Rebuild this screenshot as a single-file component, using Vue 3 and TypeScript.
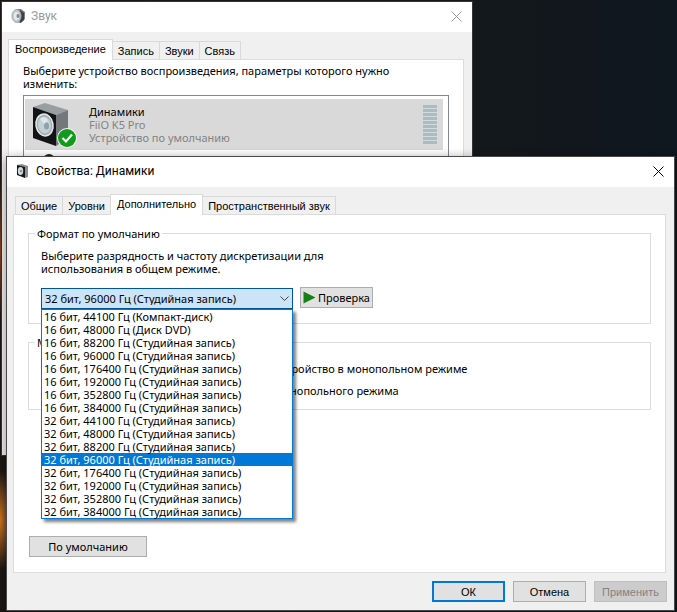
<script setup lang="ts">
import { ref } from 'vue'

const soundTabs = ['Воспроизведение', 'Запись', 'Звуки', 'Связь']
const propertyTabs = ['Общие', 'Уровни', 'Дополнительно', 'Пространственный звук']

const rates: string[] = [
  '16 бит, 44100 Гц (Компакт-диск)',
  '16 бит, 48000 Гц (Диск DVD)',
  ...['88200', '96000', '176400', '192000', '352800', '384000'].map((r) => `16 бит, ${r} Гц (Студийная запись)`),
  ...['44100', '48000', '88200', '96000', '176400', '192000', '352800', '384000'].map(
    (r) => `32 бит, ${r} Гц (Студийная запись)`,
  ),
]

const selected = ref('32 бит, 96000 Гц (Студийная запись)')
const exclusive = ref(true)
const priority = ref(true)
</script>

<template>
  <main class="desktop">
    <section class="window sound" aria-label="Звук">
      <header class="titlebar">
        <svg class="app-icon" viewBox="0 0 16 16" aria-hidden="true">
          <path d="M6 1h5l4 3v7l-4 4-5-1z" fill="#7b8184" />
          <path d="M10 2l4 3v7l-4 3z" fill="#3d4245" />
          <ellipse cx="6.500" cy="8" rx="4.500" ry="6.500" fill="#c3c9cb" stroke="#a4abad" />
          <ellipse cx="6.500" cy="8" rx="2.700" ry="4" fill="#e4e9ea" />
          <ellipse cx="8" cy="8" rx="1.500" ry="2" fill="#7e888c" />
        </svg>
        <h1>Звук</h1>
        <button class="close" type="button" aria-label="Закрыть">
          <svg viewBox="0 0 11 11"><path d="M.5 .5l10 10M10.500 .5l-10 10" /></svg>
        </button>
      </header>
      <nav class="tabs" role="tablist">
        <button v-for="(tab, i) in soundTabs" :key="tab" type="button" role="tab" :aria-selected="i === 0" :class="{ active: i === 0 }">{{ tab }}</button>
      </nav>
      <div class="pane playback">
        <p>Выберите устройство воспроизведения, параметры которого нужно изменить:</p>
        <div class="devices">
          <div class="device">
            <svg class="speaker" viewBox="0 0 46 46" aria-hidden="true">
              <path d="M2 5l12-4 23 7-12 5z" fill="#999ea1" />
              <path d="M25 13l12-5v28l-12 8z" fill="#74787c" />
              <path d="M2 5l23 8v31L2 36z" fill="#131415" />
              <ellipse cx="13.500" cy="23" rx="8.500" ry="11" fill="#a7afb2" stroke="#e6eaeb" stroke-width="1.500" transform="rotate(-10 13.500 23)" />
              <ellipse cx="13.500" cy="23" rx="6.500" ry="8.500" fill="#c3d0d6" transform="rotate(-10 13.500 23)" />
              <path d="M9 17q4-4 8 1l-3 5z" fill="#dfe7ea" />
              <ellipse cx="15.500" cy="24" rx="2.500" ry="3.500" fill="#8fa1aa" />
              <circle cx="36" cy="36" r="10" fill="#eef3ee" />
              <circle cx="36" cy="36" r="9" fill="#109b18" />
              <path d="M31.500 36l3.500 3.500 6-7" fill="none" stroke="#fff" stroke-width="2.200" />
            </svg>
            <div class="device-text">
              <strong>Динамики</strong>
              <span>FiiO K5 Pro</span>
              <span>Устройство по умолчанию</span>
            </div>
            <div class="meter"><i v-for="n in 10" :key="n"></i></div>
          </div>
          <div class="next-device"></div>
        </div>
      </div>
    </section>

    <section class="window properties" aria-label="Свойства: Динамики">
      <header class="titlebar">
        <svg class="app-icon" viewBox="0 0 16 16" aria-hidden="true">
          <path d="M2 2l5-1 6 2v11l-3 1z" fill="#8a8f92" />
          <path d="M2 2l8 2v11l-8-3z" fill="#16191a" />
          <ellipse cx="5.500" cy="8" rx="2.700" ry="4" fill="#d5dbdd" />
          <circle cx="6" cy="8" r="1.300" fill="#8c979b" />
        </svg>
        <h2>Свойства: Динамики</h2>
        <button class="close" type="button" aria-label="Закрыть">
          <svg viewBox="0 0 11 11"><path d="M.5 .5l10 10M10.500 .5l-10 10" /></svg>
        </button>
      </header>
      <nav class="tabs" role="tablist">
        <button v-for="(tab, i) in propertyTabs" :key="tab" type="button" role="tab" :aria-selected="i === 2" :class="{ active: i === 2 }">{{ tab }}</button>
      </nav>
      <div class="pane advanced">
        <fieldset>
          <legend>Формат по умолчанию</legend>
          <label class="hint" for="format">Выберите разрядность и частоту дискретизации для использования в общем режиме.</label>
          <div class="format-row">
            <div class="combo">
              <select id="format" v-model="selected">
                <option v-for="rate in rates" :key="rate">{{ rate }}</option>
              </select>
              <svg class="chevron" viewBox="0 0 9 6" aria-hidden="true"><path d="M.5 .5l4 4 4-4" /></svg>
              <ul class="options" role="listbox">
                <li v-for="rate in rates" :key="rate" role="option" :aria-selected="rate === selected" :class="{ current: rate === selected }" @click="selected = rate">{{ rate }}</li>
              </ul>
            </div>
            <button class="btn test" type="button">
              <svg viewBox="0 0 13 13" aria-hidden="true"><path d="M.5 .5l12 6-12 6z" /></svg>
              Проверка
            </button>
          </div>
        </fieldset>
        <fieldset class="exclusive">
          <legend>Монопольный режим</legend>
          <label><input v-model="exclusive" type="checkbox" />Разрешить приложениям использовать устройство в монопольном режиме</label>
          <label><input v-model="priority" type="checkbox" />Предоставить приоритет приложениям монопольного режима</label>
        </fieldset>
        <button class="btn defaults" type="button">По умолчанию</button>
      </div>
      <footer>
        <button class="btn primary" type="button">ОК</button>
        <button class="btn" type="button">Отмена</button>
        <button class="btn" type="button" disabled>Применить</button>
      </footer>
    </section>
  </main>
</template>

<style>
body {
  margin: 0;
}
</style>

<style scoped>
* {
  box-sizing: border-box;
}

.desktop {
  position: relative;
  min-height: 100vh;
  overflow: hidden;
  font: 11px/13px 'Noto Sans', sans-serif;
  color: #000;
  background:
    radial-gradient(ellipse 16px 50px at 0 520px, #d0761f, transparent),
    radial-gradient(ellipse 10px 70px at 0 250px, #8a4322, transparent),
    linear-gradient(90deg, #1b1715 0, #14181b 70%, #0f1720 100%);
}

button,
select {
  margin: 0;
  font: inherit;
  color: inherit;
}

.window {
  position: absolute;
  display: flex;
  flex-direction: column;
  background: #f0f0f0;
}

.sound {
  top: 2px;
  left: 2px;
  right: 205px;
  height: 453px;
  box-shadow: 0 0 0 1px #34373a;
}

.properties {
  top: 157px;
  left: 7px;
  right: 3px;
  bottom: 2px;
  box-shadow: 0 0 0 1px #4a4a4a, 0 2px 10px 1px rgba(0, 0, 0, 0.4);
}

.titlebar {
  display: flex;
  flex: none;
  align-items: center;
  gap: 5px;
  height: 30px;
  padding: 0 10px 2px 8px;
  background: #fff;
}

.app-icon {
  width: 16px;
  height: 16px;
}

h1,
h2 {
  flex: 1;
  margin: 0;
  font: 12px/16px Roboto, 'Noto Sans', sans-serif;
}

.sound h1 {
  color: #999;
}

.close {
  display: flex;
  padding: 0;
  border: 0;
  background: none;
}

.close svg {
  width: 11px;
  height: 11px;
  fill: none;
  stroke: #000;
}

.sound .close svg {
  stroke: #999;
}

.tabs {
  display: flex;
  flex: none;
  align-items: flex-end;
  height: 27px;
  padding-left: 9px;
}

.sound .tabs {
  padding-left: 7px;
}

.tabs button {
  height: 18px;
  margin-left: -1px;
  padding: 0 5px;
  border: 1px solid #d9d9d9;
  border-bottom: 0;
  background: #f0f0f0;
  font: 11px/16px 'Liberation Sans', Arial, sans-serif;
  white-space: nowrap;
}

.tabs .active {
  z-index: 1;
  height: 21px;
  margin-bottom: -1px;
  padding: 0 6px 2px;
  background: #fff;
}

.pane {
  flex: 1;
  border: 1px solid #dcdcdc;
  background: #fff;
}

.playback {
  margin: 0 8px 8px 6px;
  padding: 4px 14px;
}

.playback p {
  max-width: 400px;
  margin: 0 0 5px;
}

.devices {
  height: 200px;
  padding: 3px 5px 3px 1px;
  border: 1px solid #828790;
}

.device {
  display: flex;
  align-items: center;
  gap: 12px;
  height: 51px;
  padding: 0 6px;
  background: #d9d9d9;
}

.speaker {
  width: 46px;
  height: 46px;
}

.device-text {
  display: flex;
  flex: 1;
  flex-direction: column;
  color: #838383;
}

.device-text strong {
  font-weight: normal;
  color: #000;
}

.meter {
  display: grid;
  gap: 1px;
  width: 14px;
}

.meter i {
  height: 3px;
  background: #a3bfc5;
}

.next-device {
  width: 12px;
  height: 12px;
  margin: 4px 18px;
  border-radius: 50%;
  background: #222;
}

.advanced {
  margin: 0 8px 0 6px;
  padding: 12px 14px 0;
}

fieldset {
  min-width: 0;
  height: 97px;
  margin: 0 0 12px;
  padding: 9px 12px 8px;
  border: 1px solid #dcdcdc;
}

legend {
  height: 13px;
  margin-left: -6px;
  padding: 0 2px;
}

.hint {
  display: block;
  max-width: 300px;
}

.format-row {
  display: flex;
  gap: 7px;
  margin-top: 12px;
}

.combo {
  position: relative;
  width: 252px;
  margin-top: 1px;
}

select {
  display: block;
  width: 100%;
  height: 21px;
  padding: 0 3px;
  border: 1px solid #005499;
  border-radius: 0;
  outline: 0;
  appearance: none;
  background: #cce4f7;
}

.chevron {
  position: absolute;
  top: 8px;
  right: 4px;
  width: 9px;
  height: 6px;
  fill: none;
  stroke: #444;
}

.options {
  position: absolute;
  z-index: 2;
  top: 100%;
  left: 0;
  right: 0;
  margin: 0;
  padding: 0;
  border: 1px solid #0078d7;
  background: #fff;
  box-shadow: 3px 3px 3px rgba(0, 0, 0, 0.5);
  list-style: none;
}

.options li {
  padding-left: 2px;
  white-space: nowrap;
}

.options .current {
  background: #0078d7;
  color: #fff;
}

.btn {
  display: flex;
  align-items: center;
  justify-content: center;
  width: 73px;
  height: 21px;
  padding: 0;
  border: 1px solid #adadad;
  background: #e1e1e1;
}

.test {
  gap: 2px;
}

.test svg {
  width: 13px;
  height: 13px;
  fill: #168016;
}

.exclusive {
  display: flex;
  flex-direction: column;
  gap: 9px;
  height: 74px;
  margin-bottom: 126px;
  padding-top: 13px;
}

.exclusive label {
  display: flex;
  align-items: center;
  gap: 6px;
  white-space: nowrap;
}

.exclusive input {
  width: 13px;
  height: 13px;
  margin: 0;
}

.defaults {
  width: 118px;
  margin-left: 1px;
}

footer {
  display: flex;
  gap: 8px;
  justify-content: flex-end;
  padding: 8px 7px;
  font: 11px/14px 'Liberation Sans', Arial, sans-serif;
}

.primary {
  border: 2px solid #0078d7;
}

.btn:disabled {
  border-color: #bfbfbf;
  background: #ccc;
  color: #838383;
}
</style>
